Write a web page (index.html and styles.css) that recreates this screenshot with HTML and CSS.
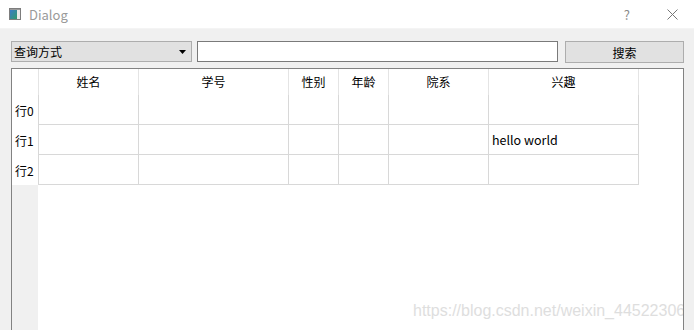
FILE: index.html
```html
<!DOCTYPE html>
<html lang="zh-CN">
<head>
    <meta charset="UTF-8">
    <title>Dialog</title>
    <link rel="stylesheet" href="styles.css">
</head>
<body>
    <div class="window">
        <div class="titlebar">
            <svg class="app-icon" width="12" height="12" viewBox="0 0 12 12">
                <defs>
                    <linearGradient id="pane" x1="0" y1="0" x2="1" y2="1">
                        <stop offset="0" stop-color="#3a7bc8"/>
                        <stop offset="1" stop-color="#2f9a6a"/>
                    </linearGradient>
                </defs>
                <rect x="0.5" y="0.5" width="11" height="11" fill="#e8e8e8" stroke="#7d7d7d"/>
                <rect x="1" y="2" width="7" height="9" fill="url(#pane)"/>
                <rect x="1" y="1" width="10" height="1" fill="#9a9a9a"/>
            </svg>
            <span class="title">Dialog</span>
            <span class="help">?</span>
            <svg class="close" width="11" height="11" viewBox="0 0 11 11">
                <path d="M0.5 0.5 L10.5 10.5 M10.5 0.5 L0.5 10.5" stroke="#777" stroke-width="1" fill="none"/>
            </svg>
        </div>

        <div class="content">
            <div class="toolbar">
                <div class="combo">
                    <span>查询方式</span>
                    <svg width="7" height="4" viewBox="0 0 7 4"><path d="M0 0 H7 L3.5 4 Z" fill="#000"/></svg>
                </div>
                <input class="search-input" type="text">
                <button class="search-btn">搜索</button>
            </div>

            <div class="table-view">
                <div class="row-headers">
                    <div class="corner"></div>
                    <div class="row-label">行0</div>
                    <div class="row-label">行1</div>
                    <div class="row-label">行2</div>
                </div>
                <div class="grid">
                    <div class="head first">姓名</div>
                    <div class="head">学号</div>
                    <div class="head">性别</div>
                    <div class="head">年龄</div>
                    <div class="head">院系</div>
                    <div class="head">兴趣</div>

                    <div class="cell first"></div>
                    <div class="cell"></div>
                    <div class="cell"></div>
                    <div class="cell"></div>
                    <div class="cell"></div>
                    <div class="cell"></div>

                    <div class="cell first"></div>
                    <div class="cell"></div>
                    <div class="cell"></div>
                    <div class="cell"></div>
                    <div class="cell"></div>
                    <div class="cell">hello world</div>

                    <div class="cell first"></div>
                    <div class="cell"></div>
                    <div class="cell"></div>
                    <div class="cell"></div>
                    <div class="cell"></div>
                    <div class="cell"></div>
                </div>
                <div class="watermark">https://blog.csdn.net/weixin_44522306</div>
            </div>
        </div>
    </div>
</body>
</html>
```

FILE: styles.css
```css
body {
    margin: 0;
    padding: 0;
    font-family: "Noto Sans CJK SC", "Noto Sans", sans-serif;
    font-size: 12px;
    color: #000;
    background-color: #f0f0f0;
    overflow: hidden;
}

.window {
    width: 694px;
    height: 330px;
    display: flex;
    flex-direction: column;
}

.titlebar {
    height: 29px;
    flex-shrink: 0;
    background-color: #fff;
    border-bottom: 1px solid #f4f4f4;
    box-sizing: border-box;
    display: flex;
    align-items: center;
    padding-left: 9px;
}

.app-icon {
    margin-top: -1px;
}

.title {
    margin-left: 8px;
    font-size: 13px;
    color: #9a9a9a;
}

.help {
    margin-left: auto;
    margin-right: 37px;
    font-size: 13px;
    color: #8a8a8a;
}

.close {
    margin-right: 16px;
}

.content {
    flex: 1;
    display: flex;
    flex-direction: column;
    padding: 12px 10px 0 11px;
    min-height: 0;
}

.toolbar {
    display: flex;
    align-items: flex-start;
    height: 21px;
}

.combo {
    width: 181px;
    height: 21px;
    box-sizing: border-box;
    border: 1px solid #adadad;
    background-color: #e1e1e1;
    display: flex;
    align-items: center;
    justify-content: space-between;
    padding: 0 5px 0 2px;
}

.combo span {
    line-height: 19px;
}

.search-input {
    width: 362px;
    height: 21px;
    box-sizing: border-box;
    margin: 0 0 0 5px;
    border: 1px solid #7a7a7a;
    background-color: #fff;
    padding: 0 3px;
    outline: none;
}

.search-btn {
    width: 119px;
    height: 22px;
    box-sizing: border-box;
    margin-left: 7px;
    border: 1px solid #adadad;
    background-color: #e1e1e1;
    font-family: inherit;
    font-size: 12px;
    padding: 0;
    color: #000;
}

.table-view {
    margin-top: 6px;
    flex: 1;
    border: 1px solid #828282;
    border-bottom: none;
    background-color: #fff;
    display: flex;
    position: relative;
    overflow: hidden;
}

.row-headers {
    width: 26px;
    background-color: #f0f0f0;
    display: flex;
    flex-direction: column;
}

.corner {
    height: 26px;
    background-color: #fff;
}

.row-label {
    height: 30px;
    background-color: #fff;
    display: flex;
    align-items: center;
    padding-left: 3px;
    padding-top: 1px;
    box-sizing: border-box;
}

.grid {
    display: grid;
    grid-template-columns: 101px 150px 50px 50px 100px 150px;
    grid-template-rows: 26px 30px 30px 30px;
    align-self: flex-start;
}

.head {
    border-right: 1px solid #e4e4e4;
    text-align: center;
    line-height: 26px;
    padding-bottom: 1px;
    box-sizing: border-box;
}

.cell {
    border-right: 1px solid #d8d8d8;
    border-bottom: 1px solid #d8d8d8;
    display: flex;
    align-items: center;
    padding-left: 3px;
    font-size: 12.5px;
}

.first {
    border-left: 1px solid #d8d8d8;
}

.head.first {
    border-left-color: #e4e4e4;
}

.watermark {
    position: absolute;
    left: 401px;
    top: 233px;
    font-family: "Liberation Sans", Arial, sans-serif;
    font-size: 16px;
    color: #dedede;
    white-space: nowrap;
}
```
